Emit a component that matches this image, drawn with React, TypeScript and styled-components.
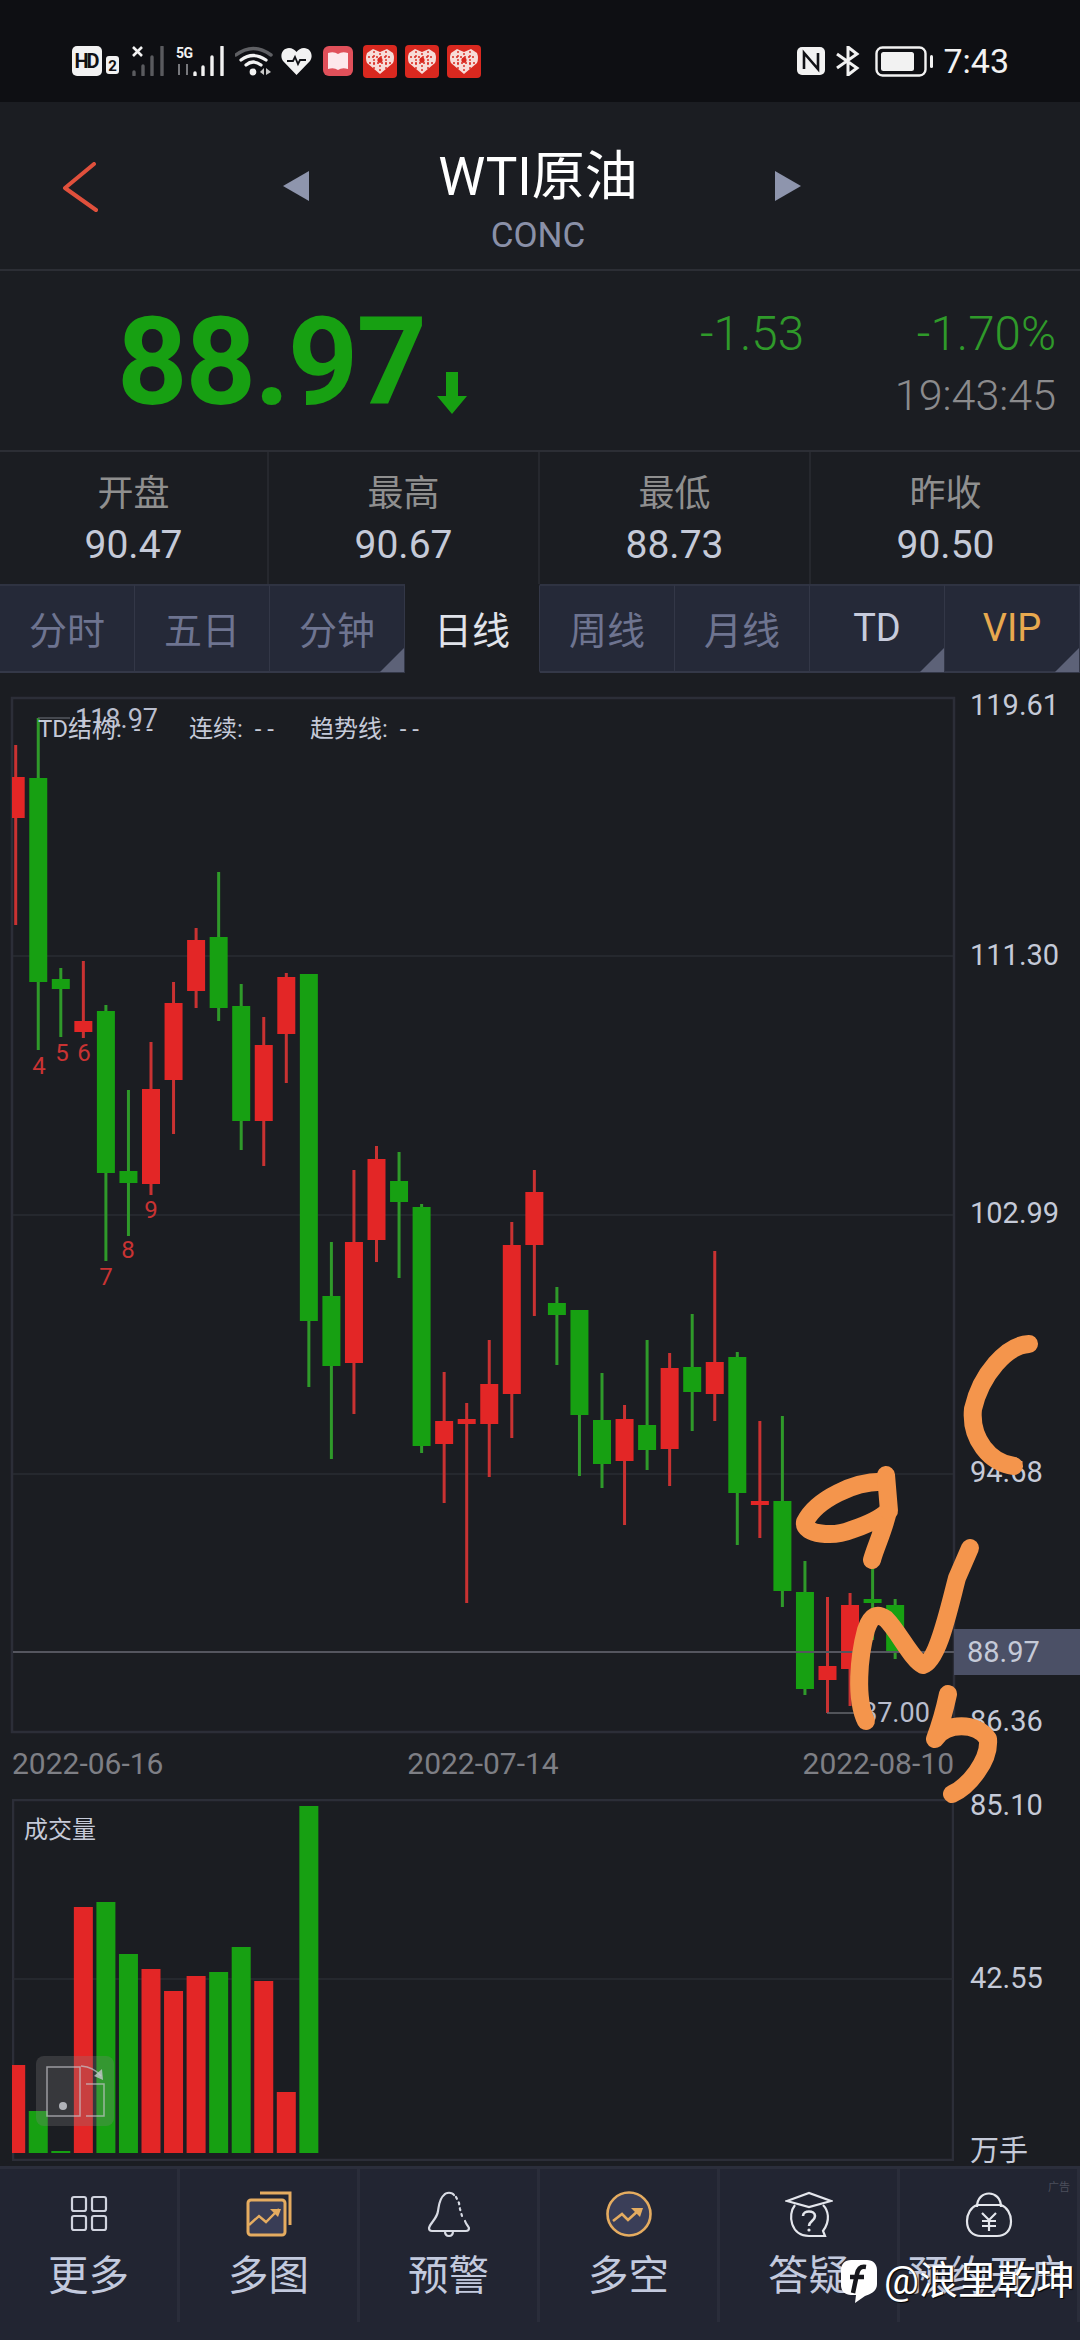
import React from 'react';
import styled, { createGlobalStyle } from 'styled-components';

type Candle = [number, number, number, number, 'r' | 'g'];

const RED = '#e32626';
const GREEN = '#17a012';
const GOLD = '#e5ac60';
const FONT = 'Roboto, "Noto Sans CJK SC", sans-serif';

// wick top, body top, body bottom, wick bottom (page y)
const candles: Candle[] = [
  [745, 777, 818, 925, 'r'],
  [718, 778, 982, 1050, 'g'],
  [968, 979, 989, 1037, 'g'],
  [961, 1021, 1032, 1038, 'r'],
  [1005, 1011, 1173, 1261, 'g'],
  [1090, 1171, 1183, 1236, 'g'],
  [1042, 1089, 1184, 1195, 'r'],
  [982, 1003, 1080, 1134, 'r'],
  [928, 940, 991, 1008, 'r'],
  [872, 937, 1008, 1021, 'g'],
  [984, 1006, 1121, 1150, 'g'],
  [1017, 1045, 1121, 1166, 'r'],
  [973, 977, 1034, 1083, 'r'],
  [974, 974, 1321, 1387, 'g'],
  [1242, 1296, 1366, 1459, 'g'],
  [1170, 1242, 1363, 1414, 'r'],
  [1146, 1159, 1240, 1262, 'r'],
  [1152, 1181, 1202, 1278, 'g'],
  [1204, 1207, 1446, 1453, 'g'],
  [1372, 1421, 1444, 1503, 'r'],
  [1403, 1419, 1424, 1603, 'r'],
  [1340, 1384, 1424, 1477, 'r'],
  [1222, 1245, 1394, 1438, 'r'],
  [1170, 1192, 1245, 1316, 'r'],
  [1287, 1303, 1315, 1365, 'g'],
  [1310, 1310, 1415, 1476, 'g'],
  [1373, 1420, 1464, 1488, 'g'],
  [1405, 1419, 1461, 1525, 'r'],
  [1340, 1425, 1450, 1470, 'g'],
  [1353, 1368, 1449, 1486, 'r'],
  [1314, 1367, 1392, 1431, 'g'],
  [1251, 1362, 1394, 1421, 'r'],
  [1352, 1357, 1493, 1545, 'g'],
  [1421, 1501, 1505, 1538, 'r'],
  [1416, 1501, 1591, 1607, 'g'],
  [1561, 1592, 1689, 1695, 'g'],
  [1597, 1666, 1680, 1713, 'r'],
  [1593, 1605, 1669, 1706, 'r'],
  [1567, 1599, 1603, 1640, 'g'],
  [1599, 1605, 1651, 1659, 'g'],
];

const volumes: [number, 'r' | 'g'][] = [
  [2065, 'r'], [2111, 'g'], [2151, 'g'], [1907, 'r'], [1902, 'g'], [1954, 'g'], [1969, 'r'],
  [1991, 'r'], [1976, 'r'], [1972, 'g'], [1947, 'g'], [1981, 'r'], [2092, 'r'], [1806, 'g'],
];

const tdMarks = [
  { n: 4, x: 39, y: 1066 },
  { n: 5, x: 62, y: 1053 },
  { n: 6, x: 84, y: 1053 },
  { n: 7, x: 106, y: 1277 },
  { n: 8, x: 128, y: 1250 },
  { n: 9, x: 151, y: 1210 },
];

const axisPrices = [
  { v: '119.61', y: 705 },
  { v: '111.30', y: 955 },
  { v: '102.99', y: 1213 },
  { v: '94.68', y: 1472 },
  { v: '86.36', y: 1721 },
];

const candleX = (i: number) => 15.7 + 22.55 * i;

const stats = [
  { label: '开盘', value: '90.47' },
  { label: '最高', value: '90.67' },
  { label: '最低', value: '88.73' },
  { label: '昨收', value: '90.50' },
];

const tabs = [
  { label: '分时' },
  { label: '五日' },
  { label: '分钟', corner: true },
  { label: '日线', active: true },
  { label: '周线' },
  { label: '月线' },
  { label: 'TD', corner: true, tone: '#c7cbdc' },
  { label: 'VIP', corner: true, tone: '#e8a94f' },
];

const GiftHeart = ({ ml }: { ml: number }) => (
  <StatusIcon $ml={ml} width="34" height="33" viewBox="0 0 34 33">
    <rect width="34" height="33" rx="4" fill="#d9281f" />
    <path d="M17 29 L4 18 Q2 13 4 8 L10 4 L17 7 L24 4 L30 8 Q32 13 30 18 Z" fill="#f7dcd8" />
    <path d="M5 12 H29 M6 18 H28 M11 6 V24 M17 8 V28 M23 6 V24" stroke="#d9281f" strokeWidth="1.400" strokeDasharray="2 2" />
    <circle cx="17" cy="15" r="2.600" fill="#d9281f" />
  </StatusIcon>
);

const App = () => {
  return (
    <Screen>
      <GlobalStyle />
      <StatusBar>
        <StatusIcon width="47" height="30" viewBox="0 0 47 30">
          <rect width="30" height="30" rx="5" fill="#f2f2f2" />
          <IconText x="15" y="22" fontSize="20" fontWeight="700" fill="#101114" textAnchor="middle" textLength="25">HD</IconText>
          <rect x="34" y="10" width="13" height="18" rx="3" fill="#f2f2f2" />
          <IconText x="40.5" y="25" fontSize="15" fontWeight="700" fill="#101114" textAnchor="middle">2</IconText>
        </StatusIcon>
        <StatusIcon $ml={13} width="33" height="30" viewBox="0 0 33 30">
          <path d="M1 1 L10 10 M10 1 L1 10" stroke="#f2f2f2" strokeWidth="2.600" />
          <path d="M2 26 V29 M11 20 V29 M20 11 V29 M30 1 V29" stroke="#5a5b5f" strokeWidth="3.400" strokeLinecap="round" />
        </StatusIcon>
        <StatusIcon $ml={11} width="49" height="30" viewBox="0 0 49 30">
          <IconText x="0" y="12" fontSize="14" fontWeight="700" fill="#f2f2f2" textLength="17">5G</IconText>
          <path d="M3 18 V29 M11 18 V29" stroke="#77787c" strokeWidth="2" />
          <path d="M19 27 V29 M27 21 V29 M36 11 V29 M46 1 V29" stroke="#f2f2f2" strokeWidth="3.400" strokeLinecap="round" />
        </StatusIcon>
        <StatusIcon $ml={10} width="38" height="30" viewBox="0 0 38 30">
          <path d="M1 9 Q18 -4 36 9" stroke="#5f6064" strokeWidth="3.400" fill="none" strokeLinecap="round" />
          <path d="M6 14 Q18 5 31 14 M11 19 Q18 13 26 19" stroke="#f2f2f2" strokeWidth="3.200" fill="none" strokeLinecap="round" />
          <circle cx="18" cy="26" r="3.400" fill="#f2f2f2" />
          <path d="M29 22 L25 26 L29 29 Z M31 22 L36 26 L31 29 Z" fill="#c9c9c9" />
        </StatusIcon>
        <StatusIcon $ml={8} width="31" height="28" viewBox="0 0 31 28">
          <path d="M15.500 28 L2 14 C-2 8 2 1 8 1 C11 1 14 3 15.500 5 C17 3 20 1 23 1 C29 1 33 8 29 14 Z" fill="#f2f2f2" />
          <path d="M6 14 H12 L14 10 L17 17 L19 13 H25" stroke="#111216" strokeWidth="1.800" fill="none" />
        </StatusIcon>
        <StatusIcon $ml={11} width="30" height="30" viewBox="0 0 30 30">
          <rect width="30" height="30" rx="6" fill="#e0505a" />
          <path d="M5 7 Q11 5 15 8 Q19 5 25 7 V23 Q19 21 15 24 Q11 21 5 23 Z" fill="#fde8ec" />
        </StatusIcon>
        <GiftHeart ml={10} />
        <GiftHeart ml={8} />
        <GiftHeart ml={8} />
        <StatusRight>
          <StatusIcon width="28" height="28" viewBox="0 0 28 28">
            <rect width="28" height="28" rx="5" fill="#f2f2f2" />
            <path d="M7 22 V6 L21 22 V6" stroke="#111216" strokeWidth="2.600" fill="none" />
          </StatusIcon>
          <StatusIcon $ml={10} width="26" height="30" viewBox="0 0 26 30">
            <path d="M2 8 L22 22 L13 29 V1 L22 8 L2 22" stroke="#f2f2f2" strokeWidth="3" fill="none" />
          </StatusIcon>
          <StatusIcon $ml={14} width="58" height="31" viewBox="0 0 58 31">
            <rect x="1.500" y="1.500" width="49" height="28" rx="6" stroke="#f2f2f2" strokeWidth="2.400" fill="none" />
            <rect x="6" y="6" width="33" height="19" rx="2.500" fill="#f2f2f2" />
            <rect x="55" y="9" width="3" height="13" rx="1.500" fill="#f2f2f2" />
          </StatusIcon>
          <Clock>7:43</Clock>
        </StatusRight>
      </StatusBar>

      <Header>
        <BackIcon width="36" height="50" viewBox="0 0 36 50">
          <path d="M32 2 L3 26 L34 48" stroke="#e0503c" strokeWidth="4" fill="none" strokeLinecap="round" strokeLinejoin="round" />
        </BackIcon>
        <Arrow $dir="left" />
        <TitleBlock>
          <Title>WTI原油</Title>
          <Code>CONC</Code>
        </TitleBlock>
        <Arrow $dir="right" />
      </Header>

      <PriceRow>
        <LastPrice>88.97</LastPrice>
        <DownArrow width="30" height="42" viewBox="0 0 30 42">
          <path d="M9 0 H21 V24 H30 L15 42 L0 24 H9 Z" fill={GREEN} />
        </DownArrow>
        <Quote>
          <QuoteValue>-1.53</QuoteValue>
          <QuoteValue>-1.70%</QuoteValue>
          <span />
          <QuoteTime>19:43:45</QuoteTime>
        </Quote>
      </PriceRow>

      <StatsRow>
        {stats.map((s) => (
          <StatCell key={s.label}>
            <StatLabel>{s.label}</StatLabel>
            <StatValue>{s.value}</StatValue>
          </StatCell>
        ))}
      </StatsRow>

      <Tabs>
        {tabs.map((t) => (
          <Tab key={t.label} $active={t.active} $corner={t.corner} $tone={t.tone}>
            {t.label}
          </Tab>
        ))}
      </Tabs>

      <PriceChart viewBox="0 697 1080 1036" width="1080" height="1036">
        <defs>
          <clipPath id="plot">
            <rect x="12" y="697" width="942" height="1036" />
          </clipPath>
        </defs>
        <rect x="12" y="698" width="942" height="1034" fill="none" stroke="#2c2e38" strokeWidth="2.500" />
        {[956, 1215, 1474].map((y) => (
          <line key={y} x1="13" x2="953" y1={y} y2={y} stroke="#2a2c33" strokeWidth="1.500" />
        ))}
        <g clipPath="url(#plot)">
          {candles.map(([hi, top, bottom, lo, c], i) => (
            <g key={i}>
              <rect x={candleX(i) - 1.5} y={hi} width="3" height={lo - hi} fill={c === 'r' ? '#c93232' : '#2f9a2a'} />
              <rect x={candleX(i) - 9} y={top} width="18" height={Math.max(bottom - top, 3)} fill={c === 'r' ? RED : GREEN} />
            </g>
          ))}
        </g>
        <line x1="13" x2="954" y1="1652" y2="1652" stroke="#55565f" strokeWidth="2" />
        {tdMarks.map((m) => (
          <MarkText key={m.n} x={m.x} y={m.y}>{m.n}</MarkText>
        ))}
        <line x1="38" x2="70" y1="718" y2="718" stroke="#55575f" strokeWidth="1.500" />
        <PeakText x="75" y="719">118.97</PeakText>
        <LegendText x="38" y="729">{'TD结构:  - -'}</LegendText>
        <LegendText x="189" y="729">{'连续:  - -'}</LegendText>
        <LegendText x="310" y="729">{'趋势线:  - -'}</LegendText>
        <line x1="827" x2="862" y1="1713" y2="1713" stroke="#66676e" strokeWidth="1.500" />
        <PeakText x="862" y="1713">87.00</PeakText>
        {axisPrices.map((p) => (
          <AxisText key={p.v} x="970" y={p.y}>{p.v}</AxisText>
        ))}
        <rect x="954" y="1629" width="126" height="46" fill="#4b5066" />
        <AxisText x="967" y="1652">88.97</AxisText>
      </PriceChart>

      <DateRow>
        <span>2022-06-16</span>
        <span>2022-07-14</span>
        <span>2022-08-10</span>
      </DateRow>

      <VolumeRow>
        <VolumePlot viewBox="12 1799 942 362" width="942" height="362">
          <rect x="13" y="1800" width="940" height="360" fill="none" stroke="#2c2e38" strokeWidth="2.500" />
          <line x1="13" x2="953" y1="1979" y2="1979" stroke="#2a2c33" strokeWidth="1.500" />
          <clipPath id="vol">
            <rect x="12" y="1799" width="942" height="362" />
          </clipPath>
          <g clipPath="url(#vol)">
            {volumes.map(([top, c], i) => (
              <rect key={i} x={candleX(i) - 9.5} y={top} width="19" height={2153 - top} fill={c === 'r' ? RED : GREEN} />
            ))}
          </g>
        </VolumePlot>
        <VolumeTitle>成交量</VolumeTitle>
        <RotateButton>
          <svg width="78" height="70" viewBox="0 0 78 70" fill="none">
            <rect x="11" y="11" width="33" height="49" stroke="#c4c6cc" strokeOpacity=".7" strokeWidth="1.500" />
            <circle cx="27" cy="50" r="4" fill="#b0b2b8" />
            <path d="M50 28 H68 V60 H50" stroke="#c4c6cc" strokeOpacity=".7" strokeWidth="1.500" />
            <path d="M45 10 Q58 11 65 20" stroke="#c4c6cc" strokeOpacity=".7" strokeWidth="1.500" />
            <path d="M67 24 L58 20 L66 13 Z" fill="#c4c6cc" fillOpacity=".8" />
          </svg>
        </RotateButton>
        <VolumeAxis>
          <span>85.10</span>
          <span>42.55</span>
          <span>万手</span>
        </VolumeAxis>
      </VolumeRow>

      <Nav>
        <NavItem>
          <NavIcon viewBox="0 0 48 48" stroke="#d0d3de" strokeWidth="2.200">
            <rect x="7" y="7" width="14" height="14" rx="2" />
            <rect x="27" y="7" width="14" height="14" rx="2" />
            <rect x="7" y="26" width="14" height="14" rx="2" />
            <rect x="27" y="26" width="14" height="14" rx="2" />
          </NavIcon>
          <NavLabel>更多</NavLabel>
        </NavItem>
        <NavItem>
          <NavIcon viewBox="0 0 48 48" stroke={GOLD} strokeWidth="3">
            <path d="M15 3 H45 V35" />
            <rect x="3" y="10" width="37" height="35" rx="3" fill="#393d56" />
            <path d="M4 35 L14 26 L21 32 L34 19" strokeWidth="2.400" />
            <path d="M25 19 H36 L33 27 Z" fill={GOLD} strokeWidth="0" />
          </NavIcon>
          <NavLabel>多图</NavLabel>
        </NavItem>
        <NavItem>
          <NavIcon viewBox="0 0 48 48" stroke="#d8dbe4" strokeWidth="2.200">
            <path d="M29 5 C27 2 21 2 19 5 C14 9 14 16 13 21 C12 29 5 33 4 38 C4 40 5 41 7 41 H41 C43 41 44 40 44 38 C43 36 41 34 40 31" strokeLinecap="round" />
            <path d="M31 7 L34 13 L35 19 L37 26" strokeDasharray="2 4" strokeLinecap="round" />
            <path d="M20 41 Q20 46 24 46 Q28 46 28 41" />
          </NavIcon>
          <NavLabel>预警</NavLabel>
        </NavItem>
        <NavItem>
          <NavIcon viewBox="0 0 48 48" stroke={GOLD} strokeWidth="2.600">
            <circle cx="24" cy="24" r="21.500" fill="#3a3e58" />
            <path d="M8 31 L17 24 L23 30 L35 19" />
            <path d="M26 18 H38 L35 27 Z" fill={GOLD} strokeWidth="0" />
          </NavIcon>
          <NavLabel>多空</NavLabel>
        </NavItem>
        <NavItem>
          <NavIcon viewBox="0 0 48 48" stroke="#e4e6ec" strokeWidth="2.200">
            <path d="M2 11 L24 3 L46 11 L24 17 Z" />
            <path d="M10 15 C2 25 6 46 24 46 L40 46 L38 41 C46 30 43 20 38 15" />
            <path d="M18 26 C18 20 30 20 30 26 C30 31 24 31 24 36" strokeWidth="2.600" />
            <circle cx="24" cy="40" r="1.600" fill="#e4e6ec" strokeWidth="0" />
          </NavIcon>
          <NavLabel>答疑</NavLabel>
        </NavItem>
        <NavItem>
          <AdTag>广告</AdTag>
          <NavIcon viewBox="0 0 48 48" stroke="#e4e6ec" strokeWidth="2.200">
            <path d="M12 17 C12 -1 36 -1 36 17" />
            <path d="M12 15 H36 C42 17 46 24 46 31 C46 41 40 46 32 46 H16 C8 46 2 41 2 31 C2 24 6 17 12 15 Z" />
            <path d="M17 23 L24 30 L31 23 M24 30 V41 M17 31 H31 M17 36 H31" />
          </NavIcon>
          <NavLabel>预约开户</NavLabel>
        </NavItem>
      </Nav>

      <Annotations viewBox="400 1140 680 700" width="680" height="700">
        <g fill="none" stroke="#f4954c" strokeWidth="18" strokeLinecap="round" strokeLinejoin="round">
          <path d="M1029 1344 C1007 1345 981 1374 973 1409 C970 1439 990 1463 1014 1466" />
          <path d="M886 1482 C855 1480 816 1500 805 1522 C803 1535 834 1537 851 1530 C869 1524 882 1517 888 1511 C884 1530 875 1548 872 1560" />
          <path d="M886 1475 L889 1511" />
          <path d="M866 1721 C855 1699 859 1656 866 1630 C871 1615 877 1613 886 1619 C899 1632 912 1660 923 1665 C938 1661 949 1608 957 1578 L970 1548" />
          <path d="M948 1694 C945 1708 940 1726 935 1739 C946 1722 977 1722 988 1739 C990 1761 968 1787 952 1794" />
        </g>
      </Annotations>

      <Watermark>
        <svg width="36" height="43" viewBox="0 0 36 43">
          <path d="M10 0 H26 C32 0 36 4 36 10 V24 C36 31 30 34 24 36 L14 43 L15 35 H10 C4 35 0 31 0 25 V10 C0 4 4 0 10 0 Z" fill="#fff" />
          <path d="M25 7 C19 6 17 9 16 14 L12 33 M9 17 H23" stroke="#16171c" strokeWidth="4.500" fill="none" />
        </svg>
        <WatermarkText>@浪里乾坤</WatermarkText>
      </Watermark>
    </Screen>
  );
};

const GlobalStyle = createGlobalStyle`
  html, body {
    margin: 0;
    padding: 0;
    background: #1b1d22;
  }
  * {
    box-sizing: border-box;
  }
`;

const Screen = styled.div`
  position: relative;
  width: 1080px;
  height: 2340px;
  overflow: hidden;
  background: #1b1d22;
  font-family: ${FONT};
`;

const StatusBar = styled.div`
  display: flex;
  align-items: center;
  height: 102px;
  padding: 20px 71px 0 72px;
  background: #0e0f13;
`;

const StatusIcon = styled.svg<{ $ml?: number }>`
  flex: none;
  margin-left: ${({ $ml }) => $ml ?? 0}px;
`;

const IconText = styled.text`
  font-family: ${FONT};
`;

const StatusRight = styled.div`
  display: flex;
  align-items: center;
  margin-left: auto;
`;

const Clock = styled.span`
  margin-left: 10px;
  font-size: 34px;
  color: #f2f2f2;
`;

const Header = styled.div`
  display: grid;
  grid-template-columns: 283px 26px 466px 26px;
  height: 169px;
  border-bottom: 2px solid #2c2e35;
  align-items: start;
`;

const BackIcon = styled.svg`
  margin: 60px 0 0 62px;
`;

const Arrow = styled.div<{ $dir: 'left' | 'right' }>`
  width: 26px;
  height: 30px;
  margin-top: 69px;
  background: #8e95ad;
  clip-path: ${({ $dir }) =>
    $dir === 'left' ? 'polygon(100% 0, 100% 100%, 0 50%)' : 'polygon(0 0, 0 100%, 100% 50%)'};
`;

const TitleBlock = styled.div`
  display: flex;
  flex-direction: column;
  align-items: center;
  padding: 45px 8px 0 0;
`;

const Title = styled.div`
  font-size: 53px;
  line-height: 60px;
  color: #fff;
`;

const Code = styled.div`
  margin-top: 9px;
  font-size: 35px;
  line-height: 40px;
  color: #8a90a8;
`;

const PriceRow = styled.div`
  display: flex;
  height: 181px;
  padding-left: 117px;
  border-bottom: 2px solid #2c2e35;
`;

const LastPrice = styled.div`
  margin-top: 23px;
  font-size: 123px;
  line-height: 136px;
  font-weight: 700;
  letter-spacing: -2px;
  color: ${GREEN};
`;

const DownArrow = styled.svg`
  margin: 101px 0 0 12px;
`;

const Quote = styled.div`
  display: grid;
  grid-template-columns: auto 162px;
  column-gap: 90px;
  row-gap: 1px;
  justify-items: end;
  align-self: flex-start;
  margin: 33px 24px 0 auto;
`;

const QuoteValue = styled.div`
  font-size: 47.500px;
  line-height: 60px;
  font-weight: 300;
  color: #2f9a2a;
`;

const QuoteTime = styled.div`
  font-size: 43px;
  line-height: 60px;
  font-weight: 300;
  color: #8b8b8d;
`;

const StatsRow = styled.div`
  display: grid;
  grid-template-columns: 267px 271px 271px 271px;
  height: 132px;
`;

const StatCell = styled.div`
  display: flex;
  flex-direction: column;
  align-items: center;
  padding-top: 19px;
  border-left: 2px solid #26282e;

  &:first-child {
    border-left: none;
  }
`;

const StatLabel = styled.div`
  font-size: 36px;
  line-height: 46px;
  color: #8f8f8f;
`;

const StatValue = styled.div`
  margin-top: 5px;
  font-size: 39px;
  line-height: 46px;
  color: #c5cad8;
`;

const Tabs = styled.div`
  display: grid;
  grid-template-columns: repeat(8, 135px);
  height: 89px;
`;

const Tab = styled.div<{ $active?: boolean; $corner?: boolean; $tone?: string }>`
  position: relative;
  display: flex;
  align-items: center;
  justify-content: center;
  padding-bottom: 2px;
  font-size: 38px;
  color: ${({ $active, $tone }) => ($active ? '#e0e3ea' : $tone ?? '#6e7490')};
  background: ${({ $active }) => ($active ? '#1b1d22' : '#252938')};
  border-top: 2px solid ${({ $active }) => ($active ? '#1b1d22' : '#2f3342')};
  border-bottom: 2px solid ${({ $active }) => ($active ? '#1b1d22' : '#343848')};
  border-right: 1px solid #333747;

  &::after {
    content: '';
    display: ${({ $corner }) => ($corner ? 'block' : 'none')};
    position: absolute;
    right: 0;
    bottom: -1px;
    width: 24px;
    height: 24px;
    background: #5d6278;
    clip-path: polygon(100% 0, 100% 100%, 0 100%);
  }
`;

const PriceChart = styled.svg`
  display: block;
  margin-top: 24px;
  overflow: visible;
`;

const AxisText = styled.text`
  font-family: ${FONT};
  font-size: 29px;
  fill: #c5cad8;
  dominant-baseline: central;
`;

const MarkText = styled.text`
  font-family: ${FONT};
  font-size: 24px;
  fill: #c93333;
  text-anchor: middle;
  dominant-baseline: central;
`;

const PeakText = styled.text`
  font-family: ${FONT};
  font-size: 27px;
  fill: #b9bdcd;
  dominant-baseline: central;
`;

const LegendText = styled.text`
  font-family: ${FONT};
  font-size: 24px;
  fill: #c5cad8;
  dominant-baseline: central;
  white-space: pre;
`;

const DateRow = styled.div`
  display: flex;
  justify-content: space-between;
  align-items: center;
  width: 942px;
  height: 66px;
  margin-left: 12px;
  padding-bottom: 5px;
  font-size: 30px;
  color: #7e7f85;
`;

const VolumeRow = styled.div`
  position: relative;
  display: flex;
  height: 362px;
  padding-left: 12px;
`;

const VolumePlot = styled.svg`
  flex: none;
`;

const VolumeTitle = styled.div`
  position: absolute;
  left: 24px;
  top: 14px;
  font-size: 24px;
  line-height: 34px;
  color: #c5cad8;
`;

const RotateButton = styled.div`
  position: absolute;
  left: 36px;
  top: 257px;
  width: 78px;
  height: 70px;
  border-radius: 8px;
  background: rgba(130, 130, 130, 0.28);
`;

const VolumeAxis = styled.div`
  display: flex;
  flex-direction: column;
  justify-content: space-between;
  height: 381px;
  margin-top: -11px;
  padding-left: 16px;
  font-size: 29px;
  line-height: 35px;
  color: #c5cad8;
`;

const Nav = styled.div`
  display: grid;
  grid-template-columns: repeat(6, 180px);
  height: 174px;
  margin-top: 5px;
  padding-bottom: 18px;
  background: #222532;
  border-top: 3px solid #2b2e3b;
`;

const NavItem = styled.div`
  position: relative;
  display: flex;
  flex-direction: column;
  align-items: center;
  padding-top: 21px;
  border-right: 3px solid #2a2d3a;
`;

const NavIcon = styled.svg`
  width: 48px;
  height: 48px;
  fill: none;
`;

const NavLabel = styled.div`
  margin-top: 13px;
  font-size: 40.500px;
  line-height: 50px;
  white-space: nowrap;
  color: #c3cade;
`;

const AdTag = styled.span`
  position: absolute;
  top: 9px;
  right: 7px;
  font-size: 11px;
  color: #4c4f5c;
`;

const Annotations = styled.svg`
  position: absolute;
  left: 400px;
  top: 1140px;
  pointer-events: none;
`;

const Watermark = styled.div`
  position: absolute;
  left: 841px;
  top: 2260px;
  display: flex;
  align-items: flex-start;
  gap: 7px;
`;

const WatermarkText = styled.span`
  font-size: 39px;
  line-height: 42px;
  white-space: nowrap;
  color: #fff;
  text-shadow: 1px 1px 1px #000;
`;

export default App;
